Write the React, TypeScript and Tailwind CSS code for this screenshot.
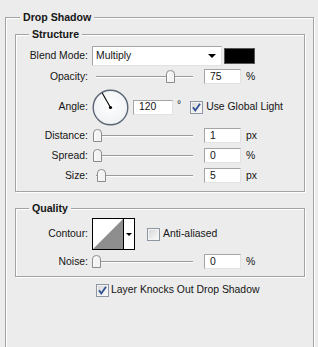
import type { ReactNode } from 'react';

const etched = 'border border-[#a3a3a3] shadow-[inset_1px_1px_0_#ffffff,1px_1px_0_#ffffff]';
const sunken = 'border border-t-[#a5a5a5] border-l-[#a5a5a5] border-r-[#e2e2e2] border-b-[#e2e2e2] bg-white';

const Thumb = () => (
  <svg width="9" height="13" viewBox="0 0 9 13" className="block">
    <path d="M0.5 12.5 V4 Q0.5 0.5 4.5 0.5 Q8.5 0.5 8.5 4 V12.5 Z" fill="#f3f3f3" stroke="#8c8c8c" />
    <path d="M2 11 V4.5 Q2 2 4.5 2" fill="none" stroke="#ffffff" />
  </svg>
);

const Slider = ({ at }: { at: number }) => (
  <div className="relative h-[13px] w-[101px]">
    <div className="absolute left-[4px] right-0 top-[6px] h-[2px] border-t border-[#9a9a9a] border-b border-b-white" />
    <div className="absolute top-0" style={{ left: at - 4 }}>
      <Thumb />
    </div>
  </div>
);

const NumBox = ({ value, w = 37 }: { value: string; w?: number }) => (
  <div className={`${sunken} flex h-[15px] items-center pl-[5px] leading-none`} style={{ width: w }}>
    {value}
  </div>
);

const Check = ({ checked }: { checked?: boolean }) => (
  <svg width="13" height="13" viewBox="0 0 13 13" className="block shrink-0">
    <defs>
      <linearGradient id={checked ? 'cg1' : 'cg0'} x1="0" y1="0" x2="1" y2="1">
        <stop offset="0" stopColor="#d8d8d8" />
        <stop offset="1" stopColor="#fafafa" />
      </linearGradient>
    </defs>
    <rect x="0.5" y="0.5" width="12" height="12" fill="#f4f4f4" stroke="#8f96a3" />
    <rect x="2" y="2" width="9" height="9" fill={`url(#${checked ? 'cg1' : 'cg0'})`} />
    {checked && <path d="M3 6.2 L5.3 9.5 L10 2.8" fill="none" stroke="#2f4f93" strokeWidth="1.8" />}
  </svg>
);

const Row = ({ label, h, className = '', children }: { label: string; h: number; className?: string; children: ReactNode }) => (
  <div className={`flex items-center ${className}`} style={{ height: h }}>
    <div className="w-[72px] shrink-0 text-right">{label}</div>
    <div className="ml-[4px] flex items-center">{children}</div>
  </div>
);

const SliderRow = ({ label, at, value, unit, className = '' }: { label: string; at: number; value: string; unit: string; className?: string }) => (
  <Row label={label} h={20} className={className}>
    <Slider at={at} />
    <div className="ml-[11px]">
      <NumBox value={value} />
    </div>
    <span className="ml-[5px]">{unit}</span>
  </Row>
);

const Dial = () => (
  <svg width="37" height="37" viewBox="0 0 37 37" className="block">
    <defs>
      <radialGradient id="dialFill" cx="0.5" cy="0.45" r="0.6">
        <stop offset="0" stopColor="#ffffff" />
        <stop offset="1" stopColor="#eef0f3" />
      </radialGradient>
    </defs>
    <circle cx="18.5" cy="18.5" r="17.3" fill="url(#dialFill)" stroke="#5b6674" strokeWidth="1.4" />
    <line x1="18.5" y1="18.5" x2="10.2" y2="4" stroke="#000" strokeWidth="1.1" />
    <circle cx="18.5" cy="18.5" r="1.6" fill="#000" />
  </svg>
);

const Contour = () => (
  <div className="flex h-[32px] w-[43px] border border-black bg-white">
    <svg width="30" height="30" viewBox="0 0 30 30" className="block">
      <rect width="30" height="30" fill="#ffffff" />
      <path d="M0 30 L30 0 L30 30 Z" fill="#8e8e8e" />
    </svg>
    <div className="flex flex-1 items-center justify-center border-l border-black">
      <div className="h-0 w-0 border-x-[3px] border-t-[3px] border-x-transparent border-t-black" />
    </div>
  </div>
);

export default function App() {
  return (
    <div className="h-[347px] w-[318px] overflow-hidden bg-[#ececec] pt-[11px] font-['Liberation_Sans',Arial,sans-serif] text-[10.4px] text-[#151515]">
      <fieldset className={`ml-[5px] h-[400px] w-[309px] ${etched}`}>
        <legend className="ml-[14px] bg-[#ececec] px-[3px] text-[10.6px] font-bold leading-[13px]">Drop Shadow</legend>
        <div className="pl-[9px]">
          <fieldset className={`mt-[4px] w-[290px] pb-[5px] ${etched}`}>
            <legend className="ml-[13px] bg-[#ececec] px-[3px] text-[10.6px] font-bold leading-[13px]">Structure</legend>
            <Row label="Blend Mode:" h={20} className="mt-[5px]">
              <div className={`${sunken} flex h-[20px] w-[130px] items-center justify-between pl-[3px] pr-[5px]`}>
                <span>Multiply</span>
                <div className="h-0 w-0 border-x-[4px] border-t-[4px] border-x-transparent border-t-black" />
              </div>
              <div className="ml-[2px] h-[16px] w-[31px] border border-[#555] bg-black" />
            </Row>
            <Row label="Opacity:" h={18} className="mt-[2px]">
              <Slider at={78} />
              <div className="ml-[11px]">
                <NumBox value="75" />
              </div>
              <span className="ml-[5px]">%</span>
            </Row>
            <Row label="Angle:" h={38} className="mt-[2px]">
              <Dial />
              <div className="ml-[4px]">
                <NumBox value="120" w={40} />
              </div>
              <span className="ml-[4px] -mt-[4px]">°</span>
              <div className="ml-[9px]">
                <Check checked />
              </div>
              <span className="ml-[3px]">Use Global Light</span>
            </Row>
            <SliderRow label="Distance:" at={5} value="1" unit="px" />
            <SliderRow label="Spread:" at={5} value="0" unit="%" />
            <SliderRow label="Size:" at={9} value="5" unit="px" />
          </fieldset>

          <fieldset className={`mt-[10px] w-[290px] pb-[4px] ${etched}`}>
            <legend className="ml-[13px] bg-[#ececec] px-[3px] text-[10.6px] font-bold leading-[13px]">Quality</legend>
            <Row label="Contour:" h={32} className="mt-[3px]">
              <Contour />
              <div className="ml-[12px]">
                <Check />
              </div>
              <span className="ml-[3px]">Anti-aliased</span>
            </Row>
            <SliderRow label="Noise:" at={4} value="0" unit="%" className="mt-[2px]" />
          </fieldset>

          <div className="mt-[6px] flex h-[14px] items-center pl-[81px]">
            <Check checked />
            <span className="ml-[2px]">Layer Knocks Out Drop Shadow</span>
          </div>
        </div>
      </fieldset>
    </div>
  );
}
